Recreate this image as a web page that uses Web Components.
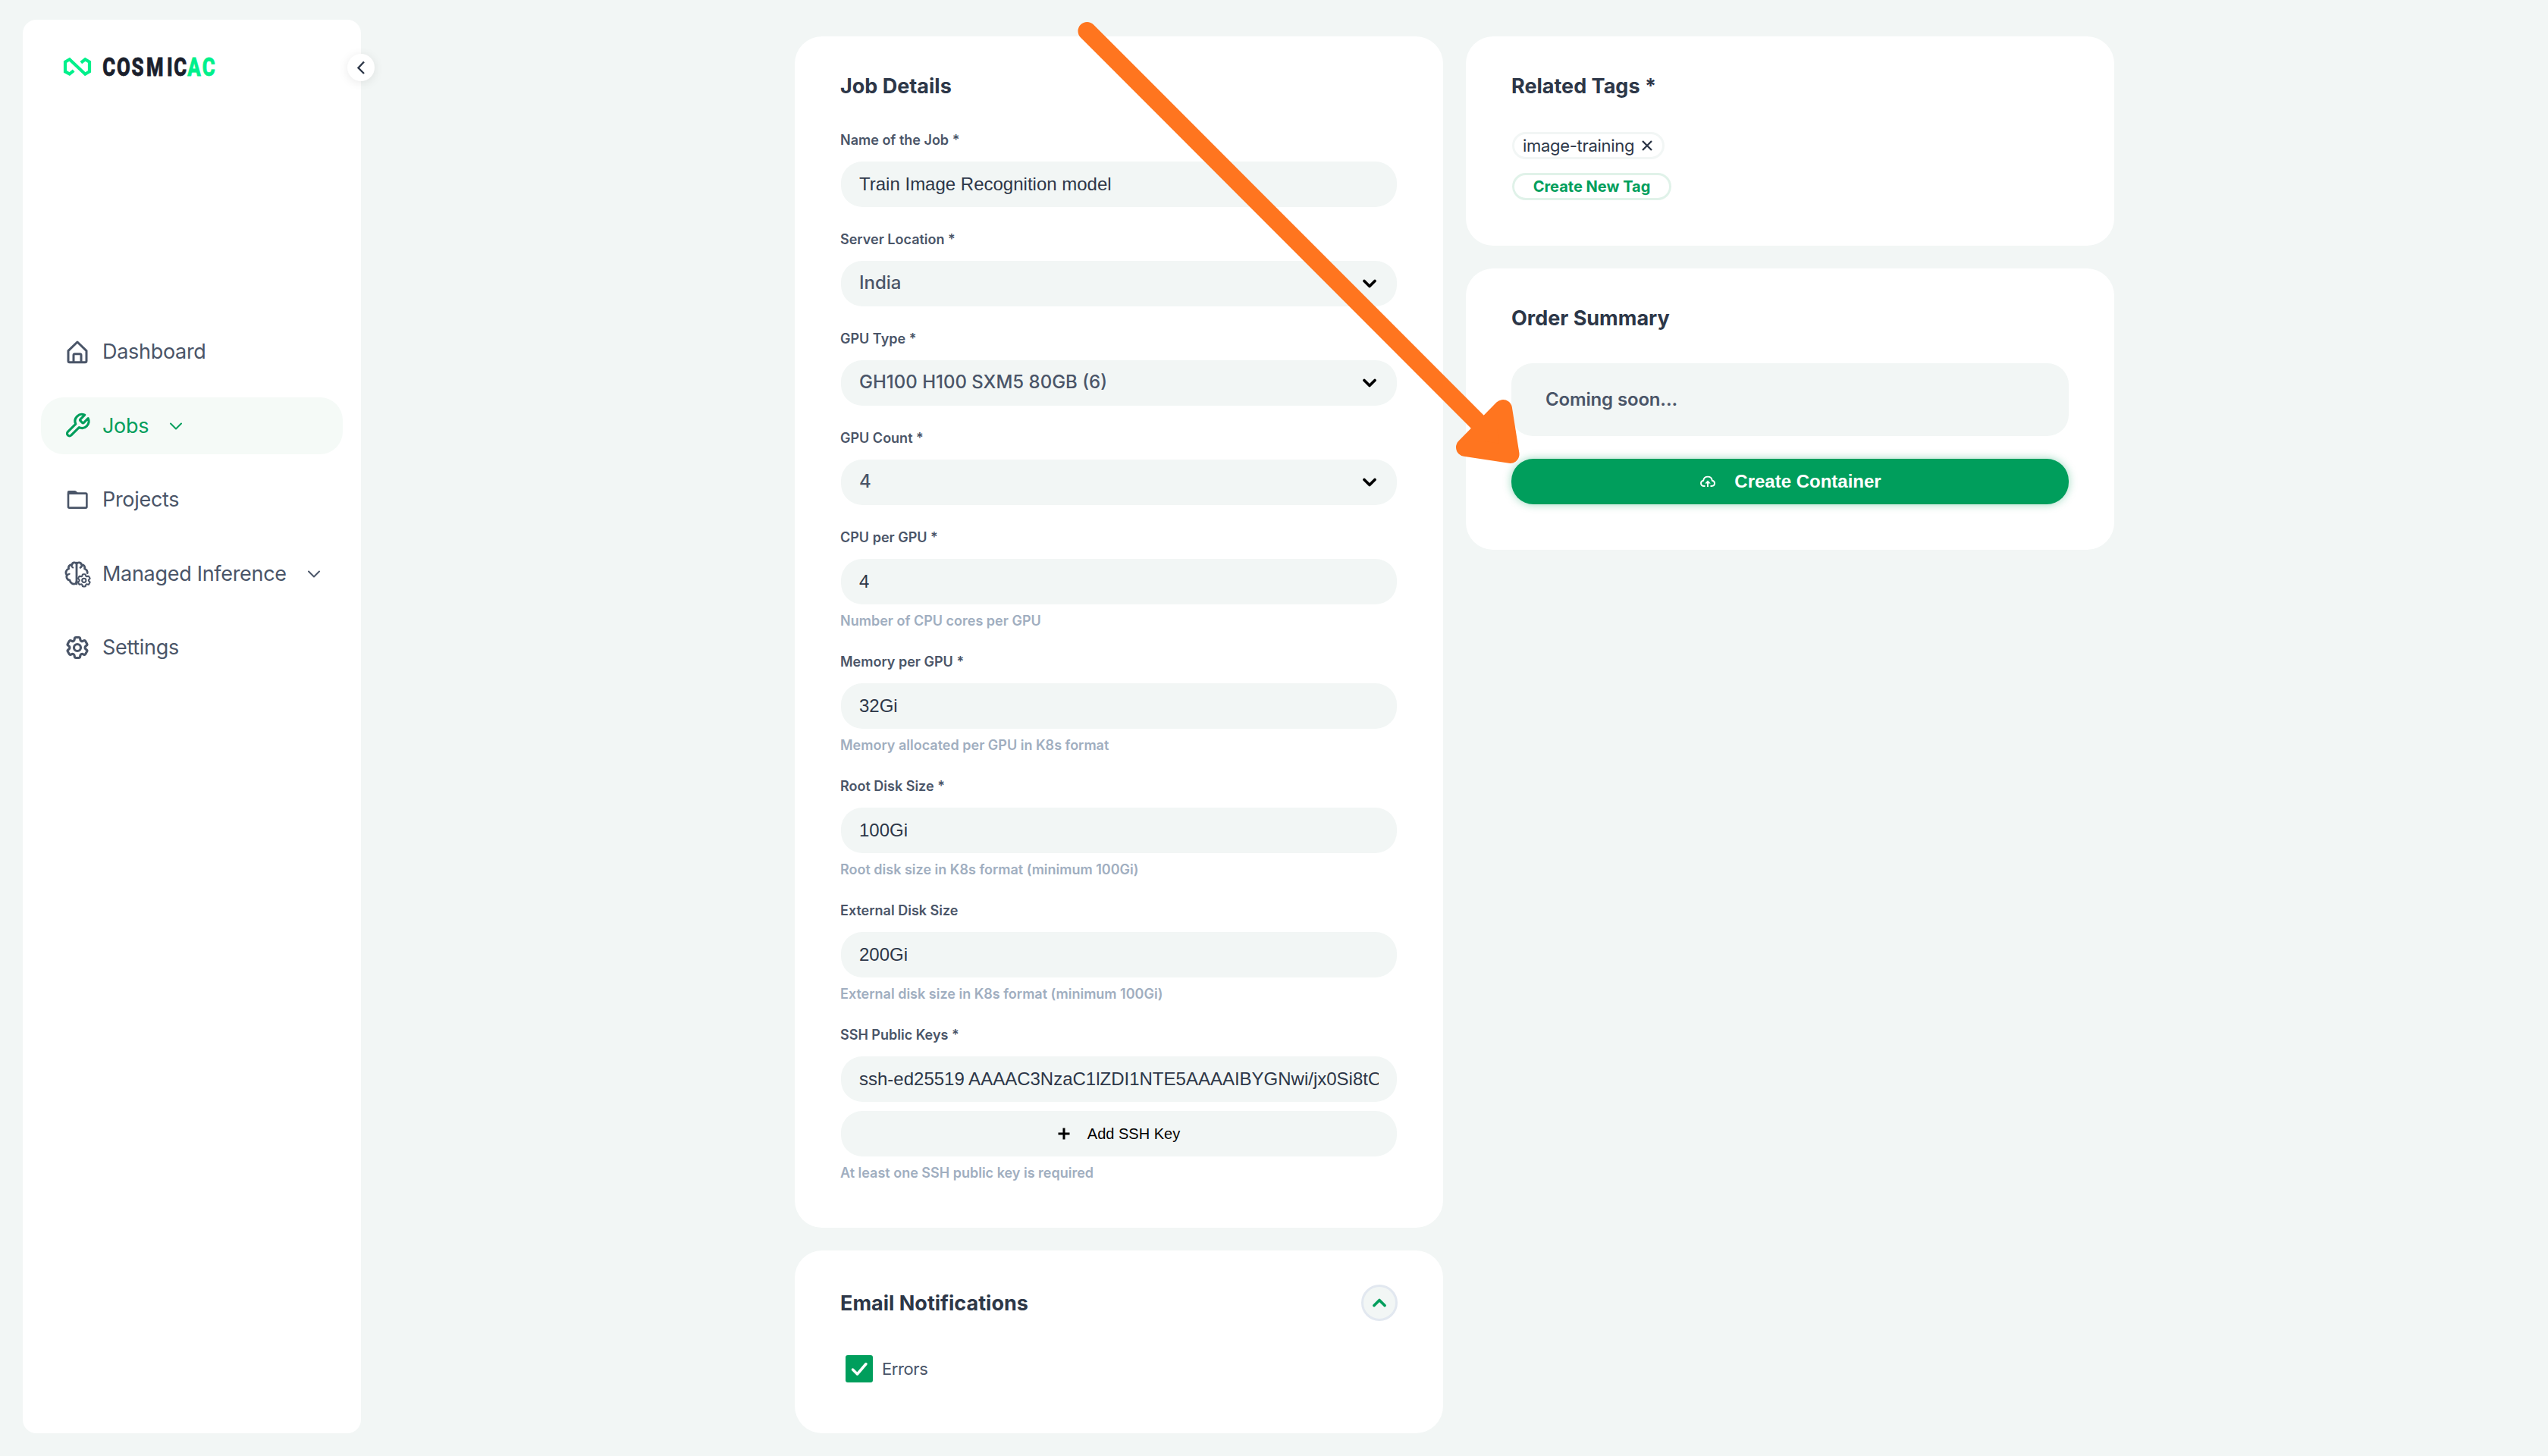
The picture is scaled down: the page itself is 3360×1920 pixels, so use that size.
<!DOCTYPE html>
<html lang="en">
<head>
<meta charset="utf-8">
<title>CosmicAC - Create Job</title>
<style>
  body {
    margin: 0;
    width: 3360px;
    height: 1920px;
    overflow: hidden;
    position: relative;
    display: flex;
    background: #f2f6f5;
    color: #2d3748;
    font-family: Inter, "Liberation Sans", sans-serif;
  }
  main {
    display: flex;
    align-items: flex-start;
    gap: 30px;
    margin: 48px 0 0 572px;
  }
  .column {
    width: 855px;
    display: flex;
    flex-direction: column;
    gap: 30px;
  }
  .job { padding-bottom: 61px; }
  .tags {
    display: flex;
    flex-direction: column;
    align-items: flex-start;
    gap: 18px;
    padding-left: 1px;
  }
</style>
</head>
<body>
  <app-sidebar>
    <nav-item icon="home">Dashboard</nav-item>
    <nav-item icon="wrench" active expandable>Jobs</nav-item>
    <nav-item icon="folder">Projects</nav-item>
    <nav-item icon="brain" expandable>Managed Inference</nav-item>
    <nav-item icon="cog">Settings</nav-item>
  </app-sidebar>

  <main>
    <div class="column">
      <form-card class="job" heading="Job Details">
        <form-field label="Name of the Job *" value="Train Image Recognition model"></form-field>
        <form-field label="Server Location *" value="India" select></form-field>
        <form-field label="GPU Type *" value="GH100 H100 SXM5 80GB (6)" select></form-field>
        <form-field label="GPU Count *" value="4" select></form-field>
        <form-field label="CPU per GPU *" value="4" hint="Number of CPU cores per GPU"></form-field>
        <form-field label="Memory per GPU *" value="32Gi" hint="Memory allocated per GPU in K8s format"></form-field>
        <form-field label="Root Disk Size *" value="100Gi" hint="Root disk size in K8s format (minimum 100Gi)"></form-field>
        <form-field label="External Disk Size" value="200Gi" hint="External disk size in K8s format (minimum 100Gi)"></form-field>
        <form-field label="SSH Public Keys *" value="ssh-ed25519 AAAAC3NzaC1lZDI1NTE5AAAAIBYGNwi/jx0Si8tO" hint="At least one SSH public key is required">
          <add-button>Add SSH Key</add-button>
        </form-field>
      </form-card>
      <form-card heading="Email Notifications" collapsible>
        <check-box>Errors</check-box>
      </form-card>
    </div>
    <div class="column">
      <form-card heading="Related Tags *">
        <div class="tags">
          <tag-chip removable>image-training</tag-chip>
          <tag-chip create>Create New Tag</tag-chip>
        </div>
      </form-card>
      <form-card heading="Order Summary">
        <order-summary note="Coming soon...">Create Container</order-summary>
      </form-card>
    </div>
  </main>

  <pointer-arrow></pointer-arrow>

<script>
const COG = "M9.594 3.94c.09-.542.56-.94 1.11-.94h2.593c.55 0 1.02.398 1.11.94l.213 1.281c.063.374.313.686.645.87.074.04.147.083.22.127.325.196.72.257 1.075.124l1.217-.456a1.125 1.125 0 0 1 1.37.49l1.296 2.247a1.125 1.125 0 0 1-.26 1.431l-1.003.827c-.293.241-.438.613-.43.992a7.723 7.723 0 0 1 0 .255c-.008.378.137.75.43.991l1.004.827c.424.35.534.955.26 1.43l-1.298 2.247a1.125 1.125 0 0 1-1.369.491l-1.217-.456c-.355-.133-.75-.072-1.076.124a6.47 6.47 0 0 1-.22.128c-.331.183-.581.495-.644.869l-.213 1.281c-.09.543-.56.94-1.11.94h-2.594c-.55 0-1.019-.398-1.11-.94l-.213-1.281c-.062-.374-.312-.686-.644-.87a6.52 6.52 0 0 1-.22-.127c-.325-.196-.72-.257-1.076-.124l-1.217.456a1.125 1.125 0 0 1-1.369-.49l-1.297-2.247a1.125 1.125 0 0 1 .26-1.431l1.004-.827c.292-.24.437-.613.43-.991a6.932 6.932 0 0 1 0-.255c.007-.38-.138-.751-.43-.992l-1.004-.827a1.125 1.125 0 0 1-.26-1.43l1.297-2.247a1.125 1.125 0 0 1 1.37-.491l1.216.456c.356.133.751.072 1.076-.124.072-.044.146-.086.22-.128.332-.183.582-.495.644-.869l.214-1.28Z";

// all nav icons share a 40x40 box
const ICONS = {
  home: `<path d="M20 7 8 18.6V32a1.8 1.8 0 0 0 1.8 1.8h20.4A1.8 1.8 0 0 0 32 32V18.6Z"/>
    <path d="M15 33.5V24.4a1.6 1.6 0 0 1 1.6-1.6h6.8a1.6 1.6 0 0 1 1.6 1.6v9.1"/>`,
  wrench: `<g transform="translate(2 1.4) scale(1.5)" stroke-width="2.1"><path d="M14.7 6.3a1 1 0 0 0 0 1.4l1.6 1.6a1 1 0 0 0 1.4 0l3.77-3.77a6 6 0 0 1-7.94 7.94l-6.91 6.91a2.12 2.12 0 0 1-3-3l6.91-6.91a6 6 0 0 1 7.94-7.94l-3.76 3.76z"/></g>`,
  folder: `<rect x="8" y="11.6" width="24.4" height="19" rx="1.4" stroke-width="2.6"/>
    <path d="M6.8 13V10a2 2 0 0 1 2-2h7.7a3 3 0 0 1 2 .8L22 12.2Z" fill="currentColor" stroke="none"/>`,
  brain: `<g stroke-width="2.8">
      <path d="M19 5.2V33"/>
      <path d="M19 6C17 4 13.4 4.6 13 7.6 9.6 7.4 7.8 10 8.6 13 5 14.4 3.8 18.6 6.2 21.4 5 24.8 7 28 10 28.2c.4 3.4 4 5.4 6.6 4.8 1.4-.3 2.4-1.4 2.4-3"/>
      <path d="M12.2 8.6c.2 1.4.8 2.2 2 2.8M6.6 21.6c.8-1.2 1.8-1.7 3-1.8" stroke-width="2.2"/>
      <path d="M19 6c2-2 6-1.4 6.4 1.6 3.2-.2 5 2.4 4.2 5.4 2.4 1 3.8 3.2 3.6 5.6M26 8.600c-.2 1.4-.8 2.2-2 2.8"/>
    </g>
    <g transform="translate(18 17.5) scale(.9)" stroke-width="2.3"><path d="${COG}"/><circle cx="12" cy="12" r="2.9"/></g>`,
  cog: `<g transform="translate(2 2) scale(1.5)" stroke-width="2.1"><path d="${COG}"/><circle cx="12" cy="12" r="3"/></g>`
};

const CHEVRON = `<svg class="chevron" viewBox="0 0 20 12" width="20" height="12" fill="none" stroke="currentColor" stroke-linecap="round" stroke-linejoin="round"><path d="M3 2.5 10 9.5 17 2.5"/></svg>`;

customElements.define("app-sidebar", class extends HTMLElement {
  constructor() {
    super();
    this.attachShadow({ mode: "open" }).innerHTML = `
      <style>
        :host {
          display: block;
          position: relative;
          box-sizing: border-box;
          width: 446px;
          height: 1864px;
          margin: 26px 0 0 30px;
          padding: 50px 24px 0;
          border-radius: 18px;
          background: #fff;
        }
        .logo { display: block; margin-left: 30px; }
        nav {
          display: flex;
          flex-direction: column;
          gap: 22.5px;
          margin-top: 326.5px;
        }
        button {
          position: absolute;
          top: 45px;
          right: -18px;
          width: 36px;
          height: 36px;
          padding: 0;
          border: none;
          border-radius: 50%;
          background: #fff;
          box-shadow: 0 2px 14px rgba(0, 0, 0, .09);
        }
        button svg { display: block; }
      </style>
      <svg class="logo" width="204" height="24" viewBox="84 76 204 24" overflow="visible">
        <path d="M97.2 93.2 91.7 97.6 86 94.4V81.6l5.7-3.3 20.6 19.4 5.7-3.3V81.6l-5.7-3.3-5.5 4.4" fill="none" stroke="#00f08b" stroke-width="4.2"/>
        <g font-family="Roboto, sans-serif" font-weight="800" font-size="33" stroke-width=".8" transform="scale(.78 1)">
          <text fill="#1a202c" stroke="#1a202c" y="99.6" x="173.5 197.5 222.5 247.5 282 294">COSMIC</text>
          <text fill="#00f08b" stroke="#00f08b" y="99.6" x="317 342">AC</text>
        </g>
      </svg>
      <button><svg width="36" height="36" fill="none" stroke="#2d3748" stroke-width="2.4"><path d="M22 10.500 14.5 18.500 22 26"/></svg></button>
      <nav><slot></slot></nav>
    `;
  }
});

customElements.define("nav-item", class extends HTMLElement {
  constructor() {
    super();
    const chevron = this.hasAttribute("expandable") ? CHEVRON : "";
    this.attachShadow({ mode: "open" }).innerHTML = `
      <style>
        :host {
          display: flex;
          align-items: center;
          box-sizing: border-box;
          height: 75px;
          padding-left: 28px;
          border-radius: 30px;
          color: #4a5568;
          font-size: 27px;
          line-height: 34px;
          letter-spacing: -.3px;
        }
        :host([active]) {
          background: #f5faf7;
          color: #009e5c;
        }
        .icon { margin-right: 13px; }
        .chevron { margin-left: 26px; stroke-width: 2; }
      </style>
      <svg class="icon" width="40" height="40" fill="none" stroke="currentColor" stroke-width="3" stroke-linecap="round" stroke-linejoin="round">${ICONS[this.getAttribute("icon")]}</svg>
      <slot></slot>
      ${chevron}
    `;
  }
});

customElements.define("form-card", class extends HTMLElement {
  constructor() {
    super();
    const toggle = this.hasAttribute("collapsible") ? `<button>${CHEVRON}</button>` : "";
    this.attachShadow({ mode: "open" }).innerHTML = `
      <style>
        :host {
          display: block;
          padding: 48px 60px 60px;
          border-radius: 36px;
          background: #fff;
        }
        :host([collapsible]) { padding: 45px 60px 67px; }
        header {
          display: flex;
          align-items: center;
          justify-content: space-between;
        }
        h2 {
          margin: 0 0 -2px;
          font-size: 27px;
          line-height: 36px;
          font-weight: 700;
        }
        .body {
          display: flex;
          flex-direction: column;
          gap: 32px;
          margin-top: 44px;
        }
        button {
          box-sizing: border-box;
          width: 48px;
          height: 48px;
          display: flex;
          align-items: center;
          justify-content: center;
          padding: 0;
          border: 3px solid #e2e8f0;
          border-radius: 50%;
          background: #f2f6f5;
          color: #009e5c;
        }
        .chevron { stroke-width: 3.7; transform: rotate(180deg); }
      </style>
      <header><h2>${this.getAttribute("heading")}</h2>${toggle}</header>
      <div class="body"><slot></slot></div>
    `;
  }
});

customElements.define("form-field", class extends HTMLElement {
  constructor() {
    super();
    const hint = this.getAttribute("hint");
    const chevron = this.hasAttribute("select") ? CHEVRON : "";
    this.attachShadow({ mode: "open" }).innerHTML = `
      <style>
        :host { display: block; }
        label, .hint {
          display: block;
          font-size: 18px;
          line-height: 22px;
          font-weight: 600;
        }
        label { color: #4a5568; }
        .hint { margin-top: 11px; color: #a0aec0; }
        .control {
          display: flex;
          align-items: center;
          justify-content: space-between;
          box-sizing: border-box;
          height: 60px;
          margin: 17px 1px 0;
          padding: 0 24px;
          border-radius: 28px;
          background: #f2f6f5;
          color: #2d3748;
          font: 24px/30px "Liberation Sans", Arial, sans-serif;
        }
        .value { overflow: hidden; white-space: nowrap; }
        :host([select]) .control {
          padding-right: 26px;
          color: #4a5568;
          font: 500 24px/30px Inter, sans-serif;
        }
        :host([select]) .value { margin-bottom: 2px; }
        .chevron { color: #000; stroke-width: 3.7; }
      </style>
      <label>${this.getAttribute("label")}</label>
      <div class="control"><span class="value">${this.getAttribute("value")}</span>${chevron}</div>
      <slot></slot>
      ${hint ? `<div class="hint">${hint}</div>` : ""}
    `;
  }
});

customElements.define("add-button", class extends HTMLElement {
  constructor() {
    super();
    this.attachShadow({ mode: "open" }).innerHTML = `
      <style>
        :host {
          display: flex;
          align-items: center;
          justify-content: center;
          gap: 23px;
          box-sizing: border-box;
          height: 60px;
          margin: 12px 1px 0;
          padding-bottom: 1px;
          border-radius: 28px;
          background: #f2f6f5;
          color: #000;
          font: 20px/24px "Liberation Sans", Arial, sans-serif;
        }
      </style>
      <svg width="16" height="16" stroke="currentColor" stroke-width="3"><path d="M8 .5v15M.5 8h15"/></svg>
      <slot></slot>
    `;
  }
});

customElements.define("check-box", class extends HTMLElement {
  constructor() {
    super();
    this.attachShadow({ mode: "open" }).innerHTML = `
      <style>
        :host {
          display: flex;
          align-items: center;
          gap: 12px;
          height: 36px;
          margin: 1px 0 0 7px;
          color: #4a5568;
          font-size: 22px;
          letter-spacing: -.4px;
        }
        svg { border-radius: 3px; background: #009e5c; }
      </style>
      <svg width="36" height="36" fill="none" stroke="#fff" stroke-width="3.5" stroke-linecap="round" stroke-linejoin="round"><path d="M9.5 19 15.5 25 27 11.5"/></svg>
      <slot></slot>
    `;
  }
});

customElements.define("tag-chip", class extends HTMLElement {
  constructor() {
    super();
    const cross = this.hasAttribute("removable")
      ? `<svg width="14" height="14" stroke="currentColor" stroke-width="2.4"><path d="M1 1 13 13M13 1 1 13"/></svg>`
      : "";
    this.attachShadow({ mode: "open" }).innerHTML = `
      <style>
        :host {
          display: flex;
          align-items: center;
          justify-content: space-between;
          box-sizing: border-box;
          width: 201px;
          height: 36px;
          padding: 0 13px 0 11px;
          border: 3px solid #f2f6f5;
          border-radius: 18px;
          font-size: 22px;
          line-height: 26px;
          letter-spacing: -.3px;
          white-space: nowrap;
        }
        :host([create]) {
          width: 210px;
          padding: 0;
          justify-content: center;
          border-color: #e0f2e9;
          color: #009e5c;
          font-size: 20px;
          font-weight: 700;
          letter-spacing: 0;
        }
      </style>
      <slot></slot>${cross}
    `;
  }
});

customElements.define("order-summary", class extends HTMLElement {
  constructor() {
    super();
    this.attachShadow({ mode: "open" }).innerHTML = `
      <style>
        :host {
          display: flex;
          flex-direction: column;
          gap: 30px;
          margin-top: -1px;
        }
        .note {
          height: 96px;
          padding-left: 45px;
          border-radius: 28px;
          background: #f2f6f5;
          color: #4a5568;
          font-size: 24px;
          line-height: 95px;
          font-weight: 600;
          letter-spacing: -.15px;
        }
        button {
          display: flex;
          align-items: center;
          justify-content: center;
          gap: 25px;
          height: 60px;
          padding: 0 0 0 2px;
          border: none;
          border-radius: 29px;
          background: #009e5c;
          box-shadow: 0 0 12px rgba(0, 158, 92, .4);
          color: #fff;
          font: bold 24px/30px "Liberation Sans", Arial, sans-serif;
        }
      </style>
      <div class="note">${this.getAttribute("note")}</div>
      <button>
        <svg width="20" height="16" fill="none" stroke="currentColor" stroke-width="1.9">
          <path d="M6.5 14H5C2.5 14 1 12.5 1 10.3 1 8.3 2.3 7 4.2 6.7 4.6 3.6 7 1.6 10 1.6s5.4 2 5.8 5.1c1.9.3 3.2 1.6 3.2 3.6 0 2.2-1.5 3.7-4 3.7h-1.5"/>
          <path d="M10 15V9"/>
          <path d="M6.2 10.5 10 6.6l3.8 3.900Z" fill="currentColor" stroke="none"/>
        </svg>
        <slot></slot>
      </button>
    `;
  }
});

// lies over the cards and leads to the submit button
customElements.define("pointer-arrow", class extends HTMLElement {
  constructor() {
    super();
    this.attachShadow({ mode: "open" }).innerHTML = `
      <style>
        :host {
          display: block;
          position: absolute;
          left: 1420px;
          top: 20px;
          pointer-events: none;
        }
        svg { display: block; }
      </style>
      <svg width="600" height="600" viewBox="1420 20 600 600" fill="#ff751f" stroke="#ff751f" stroke-width="24" stroke-linecap="round" stroke-linejoin="round">
        <path d="M1433.5 41 1965 573"/>
        <path d="M1982 539 1932 590 1991.5 599Z"/>
      </svg>
    `;
  }
});
</script>
</body>
</html>
